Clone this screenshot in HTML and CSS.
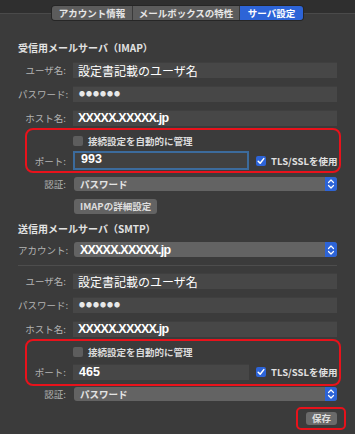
FILE: index.html
```html
<!DOCTYPE html>
<html lang="ja">
<head>
  <meta charset="UTF-8">
  <meta name="viewport" content="width=device-width, initial-scale=1.0">
  <title>サーバ設定</title>
  <link rel="stylesheet" href="styles.css">
</head>
<body>
  <div class="window">
    <div class="toolbar">
      <div class="tabs">
        <span class="tab">アカウント情報</span>
        <span class="tab">メールボックスの特性</span>
        <span class="tab active">サーバ設定</span>
      </div>
    </div>

    <div class="panel">
      <h2 class="heading">受信用メールサーバ（IMAP）</h2>

      <div class="row r1">
        <label class="label">ユーザ名:</label>
        <div class="field big">設定書記載のユーザ名</div>
      </div>
      <div class="row r2">
        <label class="label">パスワード:</label>
        <div class="field dots">●●●●●●</div>
      </div>
      <div class="row r2">
        <label class="label">ホスト名:</label>
        <div class="field host">XXXXX.XXXXX.jp</div>
      </div>

      <div class="mark">
        <div class="row check-row">
          <span class="label"></span>
          <span class="box"></span>
          <span class="check-text">接続設定を自動的に管理</span>
        </div>
        <div class="row port-row">
          <label class="label">ポート:</label>
          <div class="field port focus">993</div>
          <span class="box on"><svg viewBox="0 0 10 10" width="10" height="10"><path d="M2.2 5.2 L4.2 7.3 L7.8 2.6" fill="none" stroke="#fff" stroke-width="1.5" stroke-linecap="round" stroke-linejoin="round"/></svg></span>
          <span class="tls">TLS/SSLを使用</span>
        </div>
      </div>

      <div class="row auth">
        <label class="label">認証:</label>
        <div class="popup">
          <span>パスワード</span>
          <span class="stepper"><svg viewBox="0 0 8 12" width="8" height="12"><path d="M1.5 4.5 L4 2 L6.5 4.5 M1.5 7.5 L4 10 L6.5 7.5" fill="none" stroke="#fff" stroke-width="1.2" stroke-linecap="round" stroke-linejoin="round"/></svg></span>
        </div>
      </div>

      <div class="row btn-row">
        <span class="label"></span>
        <button class="btn">IMAPの詳細設定</button>
      </div>

      <h2 class="heading h-smtp">送信用メールサーバ（SMTP）</h2>

      <div class="row account">
        <label class="label">アカウント:</label>
        <div class="popup host-popup">
          <span>XXXXX.XXXXX.jp</span>
          <span class="stepper"><svg viewBox="0 0 8 12" width="8" height="12"><path d="M1.5 4.5 L4 2 L6.5 4.5 M1.5 7.5 L4 10 L6.5 7.5" fill="none" stroke="#fff" stroke-width="1.2" stroke-linecap="round" stroke-linejoin="round"/></svg></span>
        </div>
      </div>

      <hr class="sep">

      <div class="row r3">
        <label class="label">ユーザ名:</label>
        <div class="field big">設定書記載のユーザ名</div>
      </div>
      <div class="row r2">
        <label class="label">パスワード:</label>
        <div class="field dots">●●●●●●</div>
      </div>
      <div class="row r2">
        <label class="label">ホスト名:</label>
        <div class="field host">XXXXX.XXXXX.jp</div>
      </div>

      <div class="mark mark2">
        <div class="row check-row">
          <span class="label"></span>
          <span class="box"></span>
          <span class="check-text">接続設定を自動的に管理</span>
        </div>
        <div class="row port-row port2">
          <label class="label">ポート:</label>
          <div class="field port">465</div>
          <span class="box on"><svg viewBox="0 0 10 10" width="10" height="10"><path d="M2.2 5.2 L4.2 7.3 L7.8 2.6" fill="none" stroke="#fff" stroke-width="1.5" stroke-linecap="round" stroke-linejoin="round"/></svg></span>
          <span class="tls">TLS/SSLを使用</span>
        </div>
      </div>

      <div class="row auth auth2">
        <label class="label">認証:</label>
        <div class="popup">
          <span>パスワード</span>
          <span class="stepper"><svg viewBox="0 0 8 12" width="8" height="12"><path d="M1.5 4.5 L4 2 L6.5 4.5 M1.5 7.5 L4 10 L6.5 7.5" fill="none" stroke="#fff" stroke-width="1.2" stroke-linecap="round" stroke-linejoin="round"/></svg></span>
        </div>
      </div>

      <div class="save-row">
        <span class="save-mark"><button class="btn save">保存</button></span>
      </div>
    </div>
  </div>
</body>
</html>
```

FILE: styles.css
```css
body {
  margin: 0;
  padding: 0;
  background: #3b3b3b;
  font-family: "Noto Sans CJK JP", "Noto Sans", sans-serif;
  color: #d8d8d8;
}

.window {
  width: 355px;
  height: 434px;
  overflow: hidden;
  background: #3b3b3b;
}

/* top strip with the segmented control */
.toolbar {
  height: 13px;
  background: #2f2f2f;
  border-bottom: 1px solid #4a4a4a;
  position: relative;
}

.tabs {
  position: absolute;
  left: 52px;
  top: 6px;
  display: flex;
  height: 14px;
  border-radius: 3px;
  overflow: hidden;
  box-shadow: 0 0 0 1px #262626;
}

.tab {
  background: #5c5c5c;
  color: #e6e6e6;
  font-size: 9.5px;
  font-weight: 700;
  line-height: 14px;
  text-align: center;
  border-right: 1px solid #3a3a3a;
}

.tab:nth-child(1) { width: 80px; }
.tab:nth-child(2) { width: 106px; }

.tab.active {
  width: 63px;
  background: #2d64d7;
  color: #fff;
  border-right: none;
}

.panel {
  padding: 0 18px;
}

.heading {
  margin: 28px 0 0;
  height: 12px;
  font-size: 10px;
  line-height: 12px;
  font-weight: 700;
  color: #e2e2e2;
}

.h-smtp {
  margin-top: 9px;
}

.row {
  display: flex;
  align-items: center;
  height: 16px;
}

.r1 { margin-top: 8px; }
.r2 { margin-top: 8px; }
.r3 { margin-top: 7px; }

.label {
  width: 48px;
  flex: none;
  margin-right: 7px;
  text-align: right;
  font-size: 9.5px;
  color: #b4b4b4;
  white-space: nowrap;
}

.field {
  flex: 1;
  height: 16px;
  background: #474747;
  border-top: 1px solid #3f3f3f;
  box-sizing: border-box;
  padding-left: 6px;
  color: #fff;
  white-space: nowrap;
}

.big {
  font-size: 12px;
  line-height: 16px;
  font-weight: 400;
  padding-left: 5px;
}

.dots {
  font-size: 6px;
  line-height: 14px;
  letter-spacing: 1px;
  color: #e8e8e8;
}

.host {
  font-family: "Liberation Sans", "Noto Sans CJK JP", sans-serif;
  font-size: 12.5px;
  font-weight: 700;
  line-height: 15px;
  letter-spacing: -0.8px;
  padding-left: 5px;
}

/* red annotation outlines */
.mark {
  position: relative;
  margin-top: 9px;
}

.mark::after {
  content: "";
  position: absolute;
  left: 7px;
  right: -4px;
  top: -7px;
  bottom: -3px;
  border: 2px solid #e8121b;
  border-radius: 8px;
}

.mark2 {
  margin-top: 9px;
}

.mark2::after {
  top: -7px;
  bottom: -6px;
}

.check-row {
  height: 12px;
}

.box {
  flex: none;
  width: 10px;
  height: 10px;
  border-radius: 2px;
  background: #5d5d5d;
  display: flex;
  align-items: center;
  justify-content: center;
}

.box.on {
  background: #2d64d7;
  margin-left: 7px;
}

.check-text {
  margin-left: 5px;
  font-size: 9.5px;
  font-weight: 700;
  color: #dcdcdc;
}

.port-row {
  margin-top: 4px;
  height: 19px;
}

.port2 {
  margin-top: 6px;
  height: 16px;
}

.port {
  flex: none;
  width: 176px;
  height: 16px;
  font-family: "Liberation Sans", sans-serif;
  font-size: 12.5px;
  font-weight: 700;
  line-height: 15px;
  padding-left: 6px;
}

.port.focus {
  height: 19px;
  border: 2px solid #3c6b9c;
  background: #414141;
  line-height: 13px;
}

.tls {
  margin-left: 5px;
  font-size: 9.5px;
  font-weight: 700;
  color: #e0e0e0;
  white-space: nowrap;
}

.auth {
  margin-top: 7px;
  height: 14px;
}

.auth2 {
  margin-top: 7px;
}

.popup {
  flex: 1;
  margin-left: 1px;
  height: 14px;
  background: #636363;
  border-radius: 3px;
  display: flex;
  align-items: center;
  justify-content: space-between;
  padding-left: 6px;
  font-size: 9.5px;
  font-weight: 700;
  color: #e4e4e4;
  overflow: hidden;
}

.stepper {
  width: 12px;
  height: 14px;
  background: #2d64d7;
  display: flex;
  align-items: center;
  justify-content: center;
}

.account {
  margin-top: 7px;
  height: 15px;
}

.host-popup {
  height: 15px;
  font-family: "Liberation Sans", sans-serif;
  font-size: 12.5px;
  letter-spacing: -0.8px;
  color: #fff;
}

.host-popup .stepper {
  height: 15px;
  letter-spacing: 0;
}

.btn-row {
  margin-top: 8px;
  height: 15px;
}

.btn {
  margin-left: 1px;
  height: 15px;
  padding: 0 6px;
  border: none;
  border-radius: 3px;
  background: #636363;
  color: #dedede;
  font-family: "Noto Sans CJK JP", "Noto Sans", sans-serif;
  font-size: 9.5px;
  font-weight: 700;
  line-height: 15px;
}

.sep {
  margin: 8px 0 0;
  border: none;
  border-top: 1px solid #4d4d4d;
}

.save-row {
  display: flex;
  justify-content: flex-end;
  margin-top: 11px;
}

.save-mark {
  position: relative;
  display: flex;
}

.save-mark::after {
  content: "";
  position: absolute;
  left: -9px;
  right: -9px;
  top: -5px;
  bottom: -5px;
  border: 2px solid #e8121b;
  border-radius: 5px;
}

.save {
  width: 31px;
  height: 13px;
  padding: 0;
  line-height: 13px;
  background: #6a6a6a;
}
```
